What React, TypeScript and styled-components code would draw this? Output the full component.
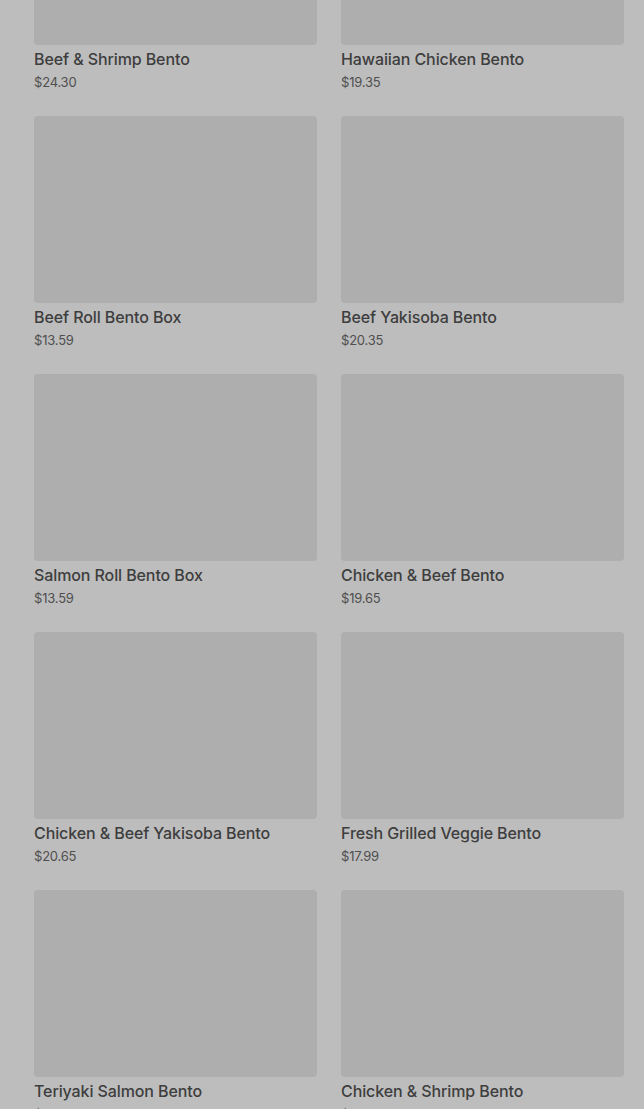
import React from "react";
import styled, { createGlobalStyle } from "styled-components";

const Global = createGlobalStyle`
  html, body { margin: 0; padding: 0; background: #bdbdbd; }
  body { font-family: Inter, "Noto Sans", sans-serif; overflow: hidden; }
`;

const Page = styled.div`
  width: 644px;
  height: 1109px;
  overflow: hidden;
  background: #bdbdbd;
`;

const Grid = styled.div`
  margin-top: -142px;
  padding: 0 20px 0 34px;
  display: grid;
  grid-template-columns: 283px 283px;
  column-gap: 24px;
  row-gap: 25px;
`;

const Card = styled.div`
  display: flex;
  flex-direction: column;
`;

const Thumb = styled.div`
  height: 187px;
  border-radius: 4px;
  background: #aeaeae;
`;

const Title = styled.div`
  margin-top: 3px;
  font-size: 16px;
  line-height: 22px;
  font-weight: 500;
  color: #3e3e3e;
  letter-spacing: -0.1px;
`;

const Price = styled.div`
  margin-top: 3px;
  font-size: 13px;
  line-height: 18px;
  color: #4f4f4f;
  letter-spacing: -0.2px;
`;

const items: [string, string][] = [
  ["Beef & Shrimp Bento", "$24.30"],
  ["Hawaiian Chicken Bento", "$19.35"],
  ["Beef Roll Bento Box", "$13.59"],
  ["Beef Yakisoba Bento", "$20.35"],
  ["Salmon Roll Bento Box", "$13.59"],
  ["Chicken & Beef Bento", "$19.65"],
  ["Chicken & Beef Yakisoba Bento", "$20.65"],
  ["Fresh Grilled Veggie Bento", "$17.99"],
  ["Teriyaki Salmon Bento", "$19.35"],
  ["Chicken & Shrimp Bento", "$21.25"],
];

export default function App() {
  return (
    <Page>
      <Global />
      <Grid>
        {items.map(([name, price]) => (
          <Card key={name}>
            <Thumb />
            <Title>{name}</Title>
            <Price>{price}</Price>
          </Card>
        ))}
      </Grid>
    </Page>
  );
}
